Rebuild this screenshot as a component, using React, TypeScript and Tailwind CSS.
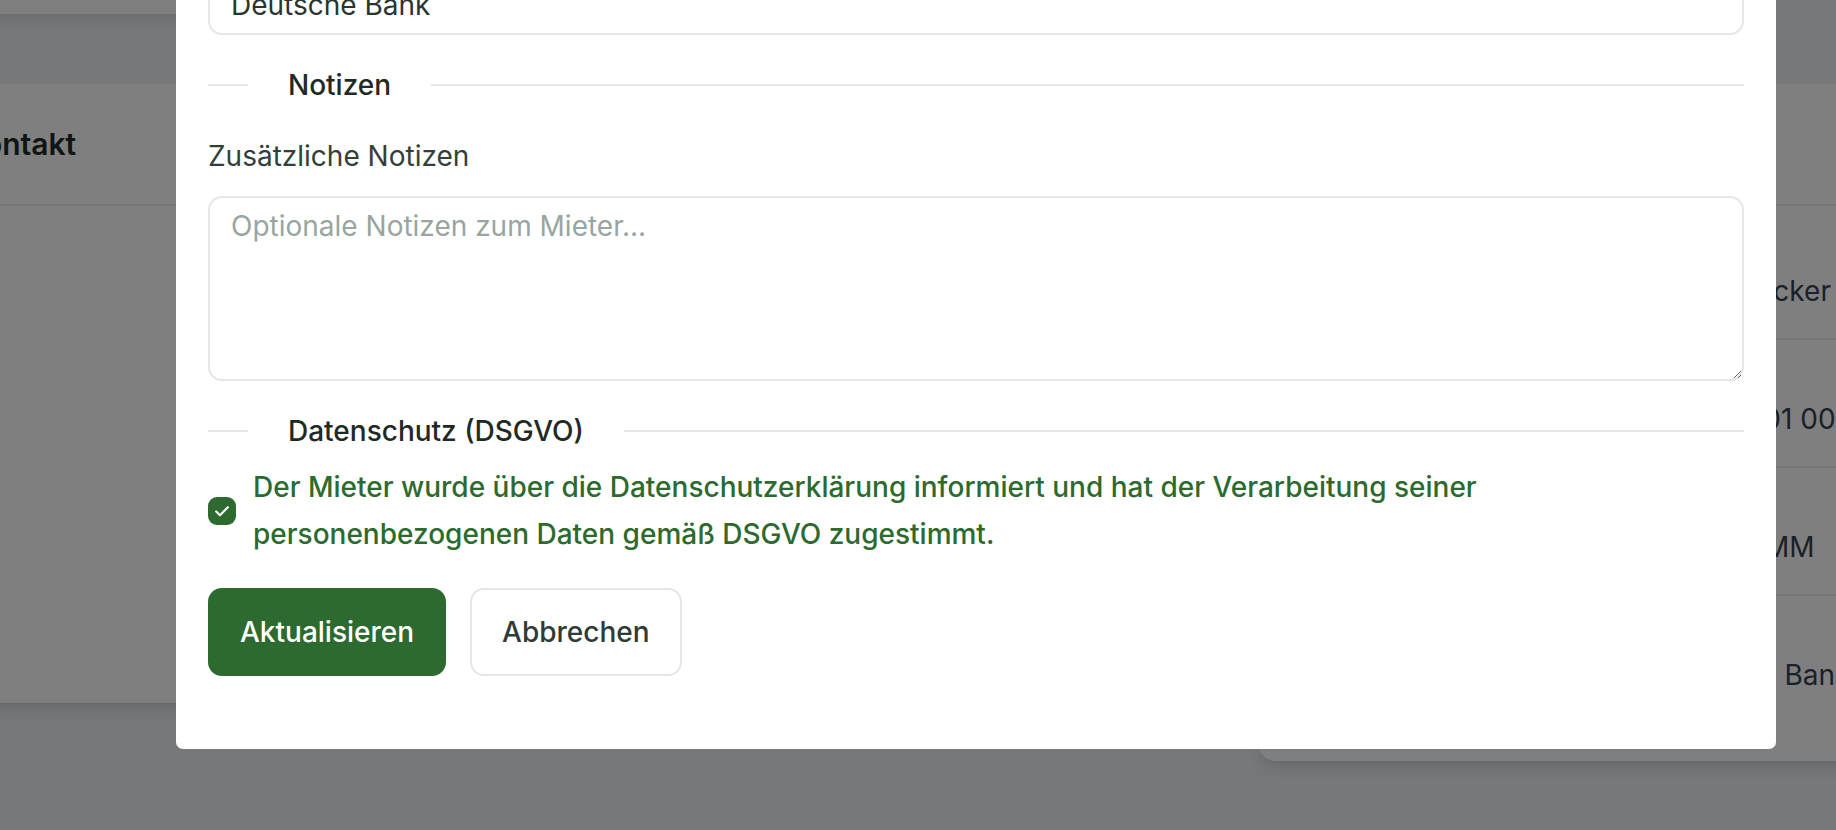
import React from "react";

type Row = { label: string; value: string };

const bankRows: Row[] = [
	{ label: "Kontoinhaber", value: "Jonas Becker" },
	{ label: "IBAN", value: "DE89 3701 0050 0532 0130 00" },
	{ label: "BIC", value: "DEUTDEMM" },
	{ label: "Bank", value: "Deutsche Bank" },
];

function SectionTitle({ title, className = "" }: { title: string; className?: string }) {
	return (
		<div className={`flex items-center ${className}`}>
			<div className="h-[2px] w-[40px] bg-[#e3e8e6]" />
			<span className="px-[40px] text-[28px] leading-[36px] font-medium text-[#1f2a24]">{title}</span>
			<div className="h-[2px] flex-1 bg-[#e3e8e6]" />
		</div>
	);
}

function CheckIcon() {
	return (
		<svg viewBox="0 0 24 24" className="h-[20px] w-[20px]" fill="none" stroke="white" strokeWidth={2.6} strokeLinecap="round" strokeLinejoin="round">
			<path d="M5 12.5l4.5 4.5L19 7.5" />
		</svg>
	);
}

export default function App() {
	return (
		<div className="relative h-[830px] w-full overflow-hidden bg-[#eef0f4] font-['Inter',sans-serif]">
			{/* Seite hinter dem Dialog */}
			<div className="flex flex-col">
				<div className="-ml-[58px] h-[14px] w-[1293px] rounded-b-2xl bg-white shadow-lg" />
				<div className="mt-[70px] flex items-start gap-6">
					<section className="-ml-[58px] h-[619px] w-[1293px] shrink-0 rounded-2xl bg-white shadow-lg">
						<div className="flex h-[122px] items-center border-b-2 border-[#eceff1] px-[22px]">
							<h3 className="text-[30px] font-semibold text-[#1f2a24]">Kontakt</h3>
						</div>
					</section>
					<section className="h-[677px] w-[700px] shrink-0 rounded-2xl bg-white shadow-lg">
						<div className="flex h-[122px] items-center border-b-2 border-[#eceff1] px-8">
							<h3 className="text-[30px] font-semibold text-[#1f2a24]">Bankverbindung</h3>
						</div>
						<div className="pt-[6px]">
							{bankRows.map((row, i) => (
								<div
									key={row.label}
									className={`grid grid-cols-[360px_1fr] px-8 pt-[61px] pb-[29px] ${i < bankRows.length - 1 ? "border-b-2 border-[#eceff1]" : ""}`}
								>
									<span className="text-[24px] leading-[36px] text-gray-500">{row.label}</span>
									<span className="whitespace-nowrap text-[28px] leading-[36px] text-gray-700">{row.value}</span>
								</div>
							))}
						</div>
					</section>
				</div>
			</div>

			{/* Dialog */}
			<div className="absolute inset-0 flex items-end bg-black/50 pb-[81px] pl-[176px]">
				<div className="w-[1600px] shrink-0 rounded-[7px] bg-white px-8 pb-[73px]">
					<div className="flex flex-col">
						<label className="mb-[22px] text-[28px] leading-[36px] text-[#33403a]">Bank</label>
						<input
							readOnly
							value="Deutsche Bank"
							className="mb-[32px] w-full rounded-[14px] border-2 border-[#e3e8e6] px-[21px] py-[10px] text-[28px] leading-[36px] text-[#2b3530] outline-none"
						/>

						<SectionTitle title="Notizen" />

						<label className="mt-[35px] text-[28px] leading-[36px] text-[#33403a]">Zusätzliche Notizen</label>
						<textarea
							placeholder="Optionale Notizen zum Mieter..."
							className="mt-[22px] h-[185px] w-full rounded-[14px] border-2 border-[#e3e8e6] px-[21px] py-[10px] text-[28px] leading-[36px] text-[#2b3530] outline-none placeholder:text-[#9aa5a0]"
						/>

						<SectionTitle title="Datenschutz (DSGVO)" className="mt-[32px]" />

						<div className="mt-[15px] flex items-center gap-[17px]">
							<span className="flex h-[28px] w-[28px] shrink-0 items-center justify-center rounded-[9px] bg-[#2c6a2f]">
								<CheckIcon />
							</span>
							<p className="max-w-[1300px] text-[28px] leading-[47px] font-medium text-[#2c6a2f]">
								Der Mieter wurde über die Datenschutzerklärung informiert und hat der Verarbeitung seiner personenbezogenen Daten gemäß DSGVO zugestimmt.
							</p>
						</div>

						<div className="mt-[30px] flex gap-[24px]">
							<button className="h-[88px] rounded-[14px] bg-[#2c6a2f] px-[32px] text-[28px] font-medium text-white">Aktualisieren</button>
							<button className="h-[88px] rounded-[14px] border-2 border-[#e3e8e6] bg-white px-[30px] text-[28px] font-medium text-[#2f3b36]">
								Abbrechen
							</button>
						</div>
					</div>
				</div>
			</div>
		</div>
	);
}
